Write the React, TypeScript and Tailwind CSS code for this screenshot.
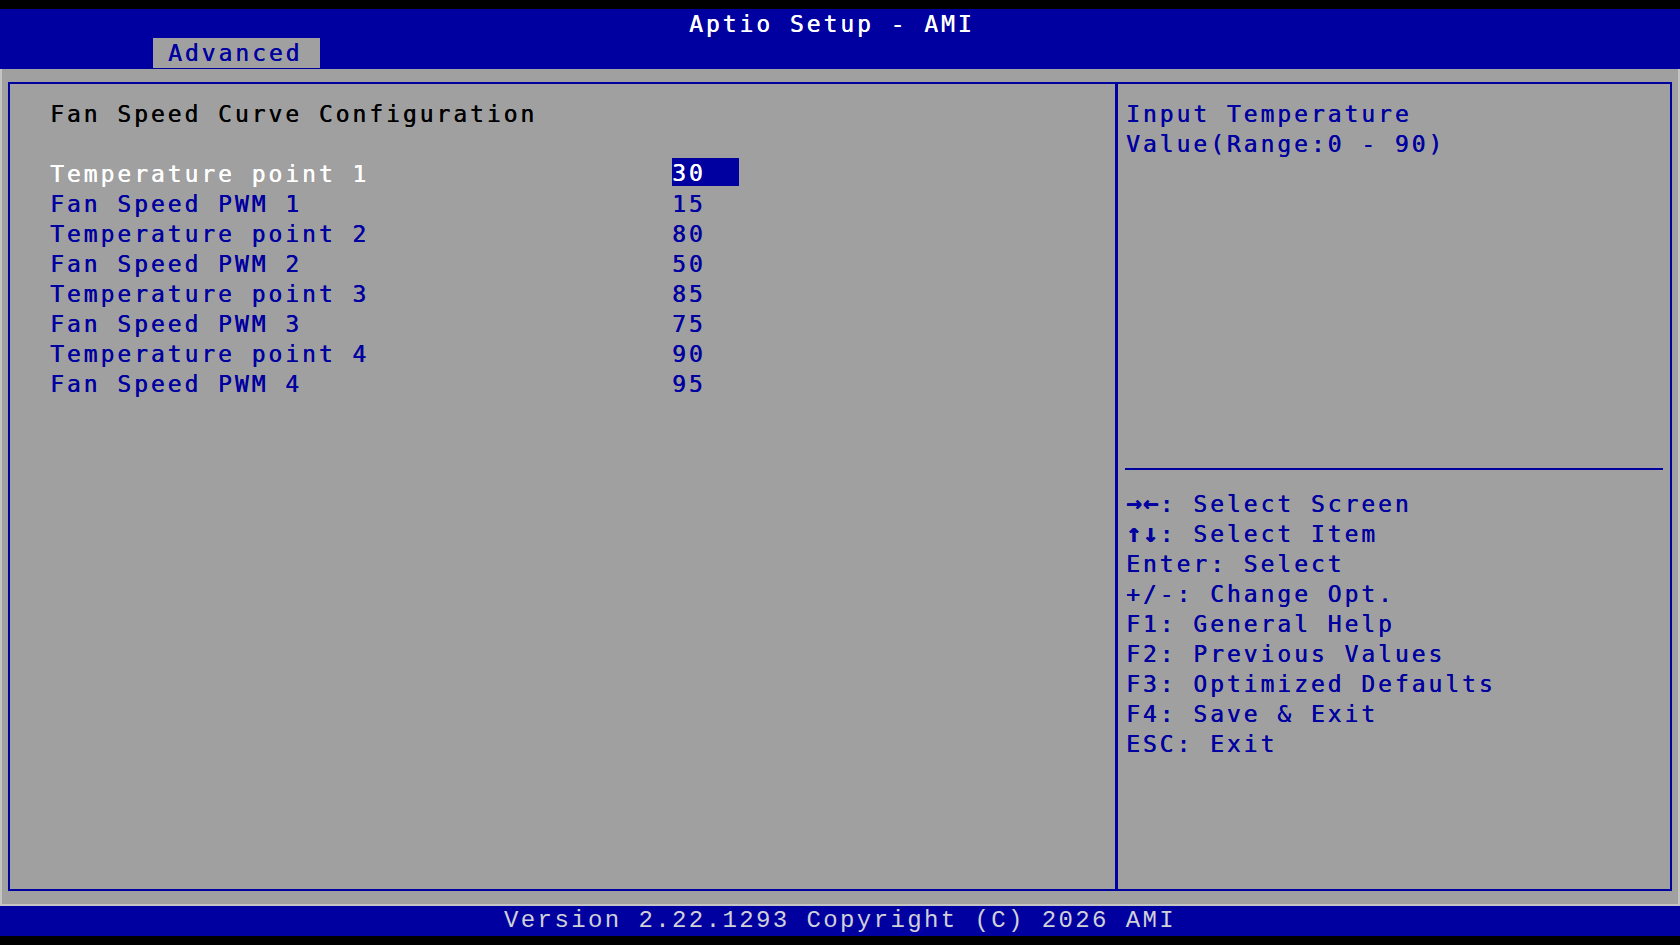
import React from 'react';

// BIOS style text: one cell = 16.8px, one row = 30px
const mono =
  "font-['DejaVu_Sans_Mono',monospace] text-[23px] tracking-[2.95px] whitespace-pre [text-shadow:0.4px_0_0_currentColor]";

const items: { label: string; value: string }[] = [
  { label: 'Temperature point 1', value: '30' },
  { label: 'Fan Speed PWM 1', value: '15' },
  { label: 'Temperature point 2', value: '80' },
  { label: 'Fan Speed PWM 2', value: '50' },
  { label: 'Temperature point 3', value: '85' },
  { label: 'Fan Speed PWM 3', value: '75' },
  { label: 'Temperature point 4', value: '90' },
  { label: 'Fan Speed PWM 4', value: '95' },
];

const keys: { key: string; desc: string; arrow?: boolean }[] = [
  { key: '→←', desc: ': Select Screen', arrow: true },
  { key: '↑↓', desc: ': Select Item', arrow: true },
  { key: 'Enter', desc: ': Select' },
  { key: '+/-', desc: ': Change Opt.' },
  { key: 'F1', desc: ': General Help' },
  { key: 'F2', desc: ': Previous Values' },
  { key: 'F3', desc: ': Optimized Defaults' },
  { key: 'F4', desc: ': Save & Exit' },
  { key: 'ESC', desc: ': Exit' },
];

export default function App() {
  const selected = 0;

  return (
    <div className={`w-[1680px] h-[945px] bg-black pt-[9px] overflow-hidden ${mono}`}>
      {/* Header */}
      <div className="bg-[#0000a0]">
        <div className="h-[30px] leading-[30px] pl-[689px] text-white">Aptio Setup - AMI</div>
        <div className="h-[30px] flex">
          <div className="ml-[153px] w-[167px] h-[30px] mt-[-1px] bg-[#a0a0a0] pl-[15px] leading-[31px] text-[#0000a0]">
            Advanced
          </div>
        </div>
      </div>

      {/* Body */}
      <div className="h-[837px] bg-[#a0a0a0] border-l-2 border-r-2 border-b-2 border-[#c4c4c4] pt-[13px]">
        <div className="mx-[6px] h-[809px] border-2 border-[#0000a0] flex">
          {/* Left panel */}
          <div className="w-[1105px] pt-[15px] pl-[40px]">
            <div className="h-[30px] leading-[30px] text-black">Fan Speed Curve Configuration</div>
            <div className="h-[30px]" />
            {items.map((it, i) => (
              <div key={i} className="h-[30px] leading-[30px] flex">
                <div className={`w-[622px] ${i === selected ? 'text-white' : 'text-[#0000a0]'}`}>{it.label}</div>
                <div
                  className={
                    i === selected
                      ? 'w-[67px] h-[28px] mt-[-1px] leading-[30px] bg-[#0000a0] text-white'
                      : 'w-[67px] text-[#0000a0]'
                  }
                >
                  {it.value}
                </div>
              </div>
            ))}
          </div>

          {/* Divider */}
          <div className="w-[3px] bg-[#0000a0]" />

          {/* Help panel */}
          <div className="flex-1 pt-[15px] text-[#0000a0]">
            <div className="h-[360px] pl-[8px]">
              <div className="h-[30px] leading-[30px]">Input Temperature</div>
              <div className="h-[30px] leading-[30px]">Value(Range:0 - 90)</div>
            </div>
            <div className="h-[30px] pt-[9px]">
              <div className="ml-[7px] w-[538px] h-[2px] bg-[#0000a0]" />
            </div>
            <div className="pl-[8px]">
              {keys.map((k, i) => (
                <div key={i} className="h-[30px] leading-[30px]">
                  <span className={k.arrow ? 'font-bold text-[26px] tracking-[1.15px] leading-[20px]' : ''}>{k.key}</span>
                  {k.desc}
                </div>
              ))}
            </div>
          </div>
        </div>
      </div>

      {/* Footer */}
      <div className="h-[30px] bg-[#0000a0] leading-[30px] pl-[504px] font-['Liberation_Mono',monospace] text-[24px] tracking-[2.4px] text-[#d0d0d8] [text-shadow:none]">
        Version 2.22.1293 Copyright (C) 2026 AMI
      </div>
    </div>
  );
}
